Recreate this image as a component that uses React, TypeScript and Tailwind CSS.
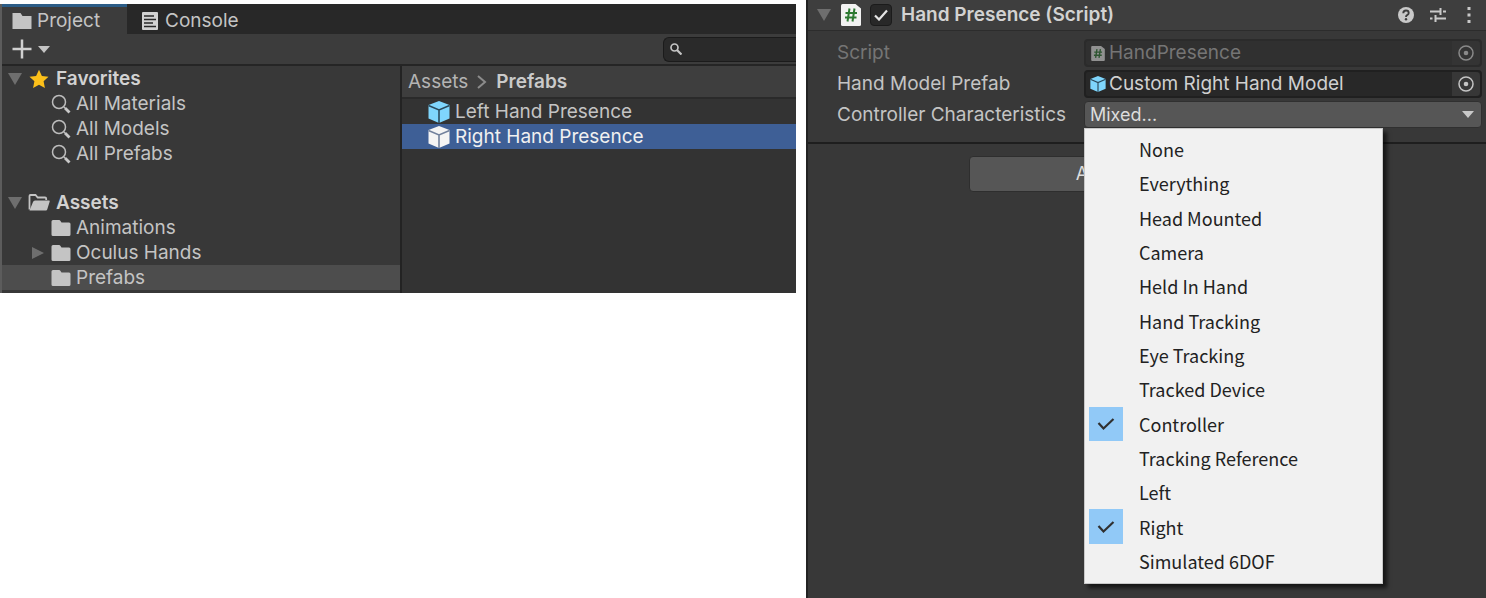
import { useState } from "react";
import type { ReactNode } from "react";

const menuOptions = [
  "None",
  "Everything",
  "Head Mounted",
  "Camera",
  "Held In Hand",
  "Hand Tracking",
  "Eye Tracking",
  "Tracked Device",
  "Controller",
  "Tracking Reference",
  "Left",
  "Right",
  "Simulated 6DOF",
];

function Folder() {
  return (
    <svg viewBox="0 0 20 16" className="h-4 w-5 shrink-0" fill="#c4c4c4" aria-hidden="true">
      <path d="M2 0h6q1 0 1.500 1l1 1.500H18q1.500 0 1.500 1.500v10.500q0 1.500-1.500 1.500H2q-1.500 0-1.500-1.500v-13Q.5 0 2 0z" />
    </svg>
  );
}

function OpenFolder() {
  return (
    <svg viewBox="0 0 22 17" className="h-[17px] w-[22px] shrink-0" aria-hidden="true">
      <path
        d="M1.500 15.500V2q0-1 1-1h5l2.200 2.500H17q1.200 0 1.200 1.200V6"
        fill="none"
        stroke="#c4c4c4"
        strokeWidth="1.800"
      />
      <path d="M7 6.500H21q1 0 .7 1l-2.500 8q-.3 1-1.200 1H1.500l3.500-8.500q.5-1.500 2-1.500z" fill="#c4c4c4" />
    </svg>
  );
}

function TabFolder() {
  return (
    <svg viewBox="0 0 20 16" className="h-4 w-5 shrink-0" fill="#c4c4c4" aria-hidden="true">
      <path d="M.5 0h8l2 3h9v13H.5z" />
    </svg>
  );
}

function ConsoleIcon() {
  return (
    <svg viewBox="0 0 18 18" className="h-[18px] w-[18px] shrink-0" aria-hidden="true">
      <rect x="1" y="0" width="16" height="18" rx="1" fill="#d2d2d2" />
      <path d="M3 4h10M3 7.500h12M3 11h9M3 14.500h12" stroke="#282828" strokeWidth="1.500" />
    </svg>
  );
}

function Search() {
  return (
    <svg viewBox="0 0 20 20" className="h-5 w-5 shrink-0" fill="none" aria-hidden="true">
      <circle cx="8" cy="8" r="6.500" stroke="#bdbdbd" strokeWidth="1.500" />
      <path d="M13 13l1 1" stroke="#bdbdbd" strokeWidth="1.500" />
      <path d="M14 14l4.500 4.500" stroke="#c8c8c8" strokeWidth="2.800" />
    </svg>
  );
}

function Triangle({ side = false }: { side?: boolean }) {
  return (
    <svg viewBox="0 0 14 14" className="h-3.5 w-3.5 shrink-0" fill="#6e6e6e" aria-hidden="true">
      {side ? <path d="M1 1l12 6-12 6z" /> : <path d="M0 1h14L7 13z" />}
    </svg>
  );
}

function Cube({ color, line, className }: { color: string; line: string; className: string }) {
  return (
    <svg viewBox="0 0 22 22" className={className} aria-hidden="true">
      <path d="M11 0l10.500 4v13.500L11 22 .5 17.500V4z" fill={color} />
      <path d="M.5 4.500L11 9l10.500-4.500M11 9v13" stroke={line} strokeWidth="1.600" fill="none" />
    </svg>
  );
}

function ScriptIcon({ className }: { className: string }) {
  return (
    <svg viewBox="0 0 20 22" className={className} aria-hidden="true">
      <path d="M1.500 0h13L20 4.500v16q0 1.500-1.500 1.500h-17Q0 22 0 20.500v-19Q0 0 1.500 0z" fill="#f2f2f2" />
      <path d="M8.500 4.500l-2 13M13.500 4.500l-2 13M4.500 9h11.500M4 13.500h11.500" stroke="#2d7a32" strokeWidth="2" fill="none" />
    </svg>
  );
}

function Target() {
  return (
    <svg viewBox="0 0 16 16" className="h-4 w-4" aria-hidden="true">
      <circle cx="8" cy="8" r="7" fill="none" stroke="#c4c4c4" strokeWidth="1.500" />
      <circle cx="8" cy="8" r="2.300" fill="#c4c4c4" />
    </svg>
  );
}

function TreeItem({ icon, children }: { icon: ReactNode; children: ReactNode }) {
  return (
    <li className="flex h-[25px] items-center gap-[5px] pl-[49px]">
      {icon}
      {children}
    </li>
  );
}

function ProjectPanel() {
  return (
    <section className="mt-1 self-start border-l-2 border-[#5c5c5c] bg-[#383838] text-[#c4c4c4]">
      <div role="tablist" className="flex h-[30px] bg-[#282828]">
        <button
          role="tab"
          aria-selected="true"
          className="flex w-[125px] items-center gap-[5px] border-t-3 border-[#2c5d87] bg-[#3c3c3c] pl-2.5"
        >
          <TabFolder />
          Project
        </button>
        <button role="tab" aria-selected="false" className="flex items-center gap-1.5 pt-[3px] pl-3.5">
          <ConsoleIcon />
          Console
        </button>
      </div>

      <div className="flex h-8 items-center justify-between border-b-2 border-[#252525] bg-[#3c3c3c] pl-2.5">
        <button aria-label="Create" className="flex items-center gap-1.5">
          <svg viewBox="0 0 20 20" className="h-5 w-5" aria-hidden="true">
            <path d="M10 .5v19M.5 10h19" stroke="#d0d0d0" strokeWidth="2.500" />
          </svg>
          <svg viewBox="0 0 12 7" className="h-[7px] w-3" fill="#c4c4c4" aria-hidden="true">
            <path d="M0 0h12L6 7z" />
          </svg>
        </button>
        <label className="flex h-[25px] w-[133px] items-center gap-1 rounded-l-md border border-r-0 border-[#1b1b1b] bg-[#2a2a2a] pl-1.5">
          <svg viewBox="0 0 12 12" className="h-3 w-3 shrink-0" fill="none" aria-hidden="true">
            <circle cx="4.500" cy="4.500" r="3.500" stroke="#c4c4c4" strokeWidth="1.700" />
            <path d="M7 7l4.500 4.500" stroke="#c4c4c4" strokeWidth="2.200" />
          </svg>
          <input type="search" aria-label="Search assets" className="w-full min-w-0 bg-transparent outline-none" />
        </label>
      </div>

      <div className="flex">
        <ul className="w-[400px] shrink-0 border-r-2 border-[#232323] pb-[3px]">
          <li className="flex h-[25px] items-center gap-[7px] pl-1.5 font-semibold text-[#d2d2d2]">
            <Triangle />
            <svg viewBox="0 0 20 20" className="h-5 w-5 shrink-0" fill="#fcc01a" aria-hidden="true">
              <path d="M10 .8l2.900 6.100 6.600.8-4.900 4.600 1.300 6.700L10 15.700 4.100 19l1.300-6.700L.5 7.700l6.600-.8z" />
            </svg>
            Favorites
          </li>
          <TreeItem icon={<Search />}>All Materials</TreeItem>
          <TreeItem icon={<Search />}>All Models</TreeItem>
          <TreeItem icon={<Search />}>All Prefabs</TreeItem>
          <li className="mt-6 flex h-[25px] items-center gap-1.5 pl-1.5 font-semibold text-[#d2d2d2]">
            <Triangle />
            <OpenFolder />
            Assets
          </li>
          <TreeItem icon={<Folder />}>Animations</TreeItem>
          <li className="flex h-[25px] items-center gap-[5px] pl-[29px]">
            <span className="flex w-[15px]">
              <Triangle side />
            </span>
            <Folder />
            Oculus Hands
          </li>
          <li className="flex h-[25px] items-center gap-[5px] bg-[#4d4d4d] pl-[49px]">
            <Folder />
            Prefabs
          </li>
        </ul>

        <div className="min-w-0 flex-1 bg-[#333333]">
          <nav aria-label="Folder path" className="flex h-[33px] items-center gap-[9px] border-b-2 border-[#2a2a2a] bg-[#3e3e3e] pl-1.5">
            <a href="#assets" className="text-[#b4b4b4]">
              Assets
            </a>
            <svg viewBox="0 0 10 14" className="h-3.5 w-2.5" fill="none" aria-hidden="true">
              <path d="M1 1l7 6-7 6" stroke="#8c8c8c" strokeWidth="2" />
            </svg>
            <a href="#prefabs" className="font-semibold text-[#cacaca]">
              Prefabs
            </a>
          </nav>
          <ul>
            <li className="flex h-[25px] items-center gap-[5px] pl-[26px]">
              <Cube color="#7fd6fd" line="#2b4a5c" className="h-[22px] w-[22px]" />
              Left Hand Presence
            </li>
            <li className="flex h-[25px] items-center gap-[5px] bg-[#3e5f96] pl-[26px] text-[#f0f0f0]">
              <Cube color="#f4f4f4" line="#71809c" className="h-[22px] w-[22px]" />
              Right Hand Presence
            </li>
          </ul>
        </div>
      </div>
    </section>
  );
}

function ObjectField({ id, icon, value, disabled }: { id: string; icon: ReactNode; value: string; disabled?: boolean }) {
  return (
    <div
      className={
        disabled
          ? "flex h-7 items-center rounded border-2 border-[#2b2b2b] bg-[#303030] text-[#757575]"
          : "flex h-7 items-center rounded border-2 border-[#202020] bg-[#282828] text-[#d0d0d0]"
      }
    >
      <span className={disabled ? "flex w-[23px] justify-center opacity-50" : "flex w-[23px] justify-center"}>{icon}</span>
      <input id={id} readOnly disabled={disabled} value={value} className="min-w-0 flex-1 bg-transparent outline-none" />
      <button
        aria-label={`Select ${value}`}
        disabled={disabled}
        className="flex h-full w-7 items-center justify-center rounded-r bg-[#373737] disabled:opacity-60"
      >
        <Target />
      </button>
    </div>
  );
}

function CharacteristicsMenu() {
  const [checked, setChecked] = useState<string[]>(["Controller", "Right"]);
  const toggle = (name: string) =>
    setChecked((now) => (now.includes(name) ? now.filter((n) => n !== name) : [...now, name]));
  return (
    <ul className="absolute top-[27px] left-0 z-10 flex h-[456px] w-[299px] flex-col border border-[#c8c8c8] bg-[#f1f1f1] pt-[3px] pb-[5px] pl-1 font-['Noto_Sans_CJK_KR','Noto_Sans',sans-serif] text-[18px] leading-6 text-[#222222] shadow-[4px_4px_4px_rgba(0,0,0,0.6)]">
      {menuOptions.map((name) => (
        <li key={name} className="flex-1">
          <label className="flex h-full items-center gap-4">
            <span className="grid h-full w-[34px] place-items-stretch">
              <input
                type="checkbox"
                checked={checked.includes(name)}
                onChange={() => toggle(name)}
                className="peer col-start-1 row-start-1 appearance-none checked:bg-[#91c9f7]"
              />
              <svg
                viewBox="0 0 18 14"
                className="pointer-events-none invisible col-start-1 row-start-1 h-3.5 w-[18px] place-self-center peer-checked:visible"
                fill="none"
                aria-hidden="true"
              >
                <path d="M1.500 6l5 5.500L16.500 2" stroke="#303030" strokeWidth="2.200" />
              </svg>
            </span>
            {name}
          </label>
        </li>
      ))}
    </ul>
  );
}

function InspectorPanel() {
  return (
    <section className="min-h-screen border-l-2 border-[#222222] bg-[#383838] text-[#c4c4c4]">
      <header className="flex h-[31px] items-center border-b border-[#2c2c2c] bg-[#3e3e3e] pr-2.5 pl-[9px]">
        <Triangle />
        <ScriptIcon className="ml-2.5 h-[22px] w-5" />
        <span className="ml-[9px] grid h-[22px] w-[22px]">
          <input
            type="checkbox"
            defaultChecked
            aria-label="Enable Hand Presence"
            className="peer col-start-1 row-start-1 appearance-none rounded border border-[#1b1b1b] bg-[#282828]"
          />
          <svg
            viewBox="0 0 14 12"
            className="pointer-events-none invisible col-start-1 row-start-1 h-3 w-3.5 place-self-center peer-checked:visible"
            fill="none"
            aria-hidden="true"
          >
            <path d="M1 6.500l4 4L13 1.500" stroke="#e4e4e4" strokeWidth="2.200" />
          </svg>
        </span>
        <h2 className="ml-[9px] flex-1 font-semibold text-[#d2d2d2]">Hand Presence (Script)</h2>
        <div className="flex items-center gap-[15px]">
          <button aria-label="Help">
            <svg viewBox="0 0 16 16" className="h-4 w-4" aria-hidden="true">
              <circle cx="8" cy="8" r="8" fill="#c9c9c9" />
              <path d="M5.300 6.200q0-2.700 2.700-2.700t2.700 2.400q0 1.200-1.300 2Q8 8.700 8 10" fill="none" stroke="#3e3e3e" strokeWidth="1.900" />
              <circle cx="8" cy="12.300" r="1.200" fill="#3e3e3e" />
            </svg>
          </button>
          <button aria-label="Presets">
            <svg viewBox="0 0 18 16" className="h-4 w-[18px]" stroke="#c9c9c9" strokeWidth="2" aria-hidden="true">
              <path d="M1 4.500h9.500M14 4.500h3M11.500 1v7M1 11.500h2.500M7 11.500h10M6.500 8v7" fill="none" />
            </svg>
          </button>
          <button aria-label="More" className="px-[5px]">
            <svg viewBox="0 0 4 16" className="h-4 w-1" fill="#c9c9c9" aria-hidden="true">
              <path d="M.5 0h3v3h-3zM.5 6.500h3v3h-3zM.5 13h3v3h-3z" />
            </svg>
          </button>
        </div>
      </header>

      <div className="grid grid-cols-[247px_1fr] gap-y-[3px] border-b-2 border-[#1e1e1e] pt-2 pr-1 pb-3.5 pl-[29px]">
        <label htmlFor="script" className="self-center text-[#757575]">
          Script
        </label>
        <ObjectField id="script" value="HandPresence" disabled icon={<ScriptIcon className="h-[15px] w-3.5" />} />
        <label htmlFor="prefab" className="self-center">
          Hand Model Prefab
        </label>
        <ObjectField
          id="prefab"
          value="Custom Right Hand Model"
          icon={<Cube color="#7fd6fd" line="#2b4a5c" className="h-4 w-4" />}
        />
        <label htmlFor="characteristics" className="self-center">
          Controller Characteristics
        </label>
        <div className="relative grid">
          <select
            id="characteristics"
            className="col-start-1 row-start-1 h-[27px] appearance-none rounded border border-[#303030] bg-[#565656] pl-[5px] text-[18px] text-[#dddddd]"
          >
            <option>Mixed...</option>
          </select>
          <svg
            viewBox="0 0 12 7"
            className="pointer-events-none col-start-1 row-start-1 mr-2 h-[7px] w-3 self-center justify-self-end"
            fill="#c9c9c9"
            aria-hidden="true"
          >
            <path d="M0 0h12L6 7z" />
          </svg>
          <CharacteristicsMenu />
        </div>
      </div>

      <div className="flex justify-center pt-3 pr-1">
        <button className="h-9 w-[353px] rounded border border-[#2e2e2e] bg-[#565656] text-[18px] text-[#dddddd]">
          Add Component
        </button>
      </div>
    </section>
  );
}

export default function App() {
  return (
    <main className="grid min-h-screen grid-cols-[796fr_680fr] gap-2.5 bg-white font-['Inter','Liberation_Sans',sans-serif] text-[19px] leading-6">
      <ProjectPanel />
      <InspectorPanel />
    </main>
  );
}
